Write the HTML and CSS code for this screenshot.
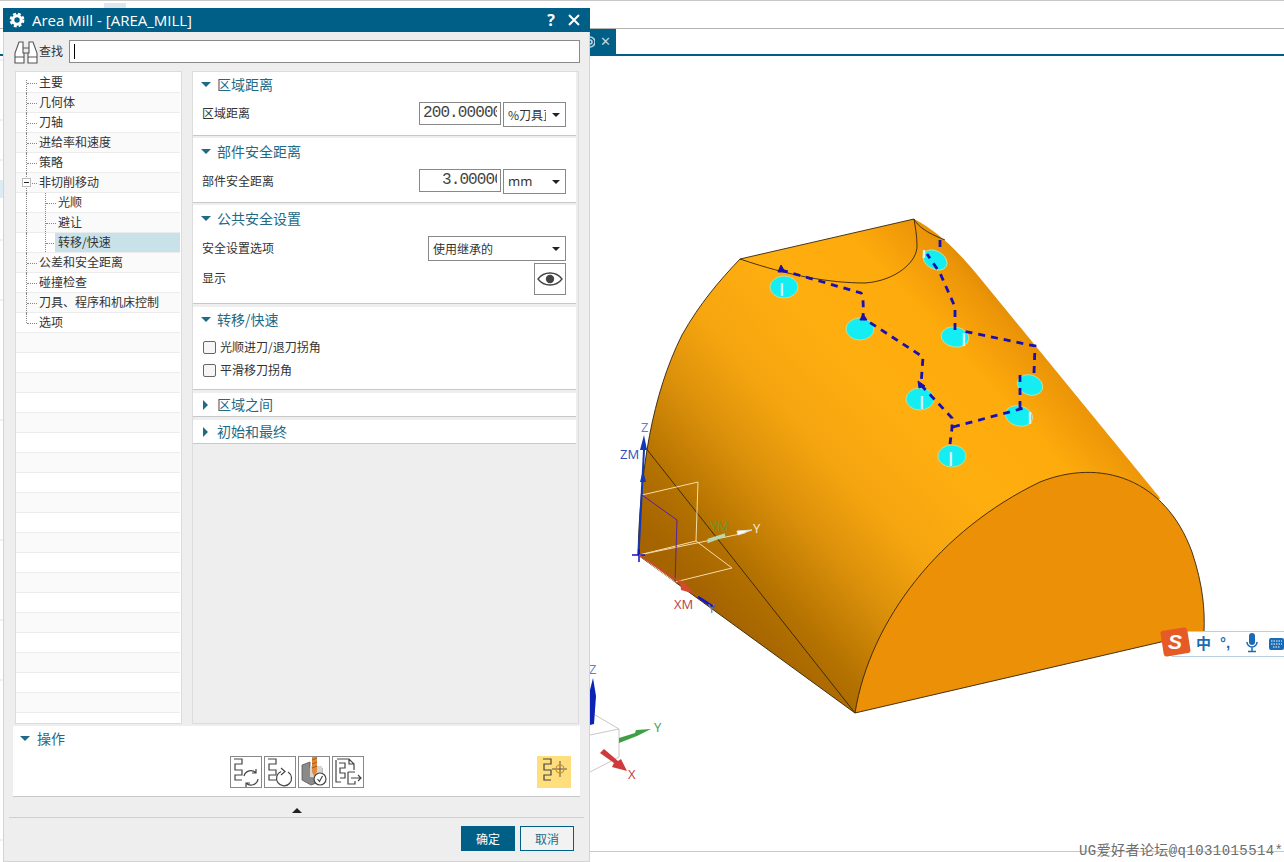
FILE: index.html
```html
<!DOCTYPE html>
<html lang="zh">
<head>
<meta charset="utf-8">
<title>Area Mill</title>
<link rel="stylesheet" href="styles.css">
</head>
<body>
<div class="app">
  <div class="topbar"></div>
  <div class="tabbar">
    <div class="tab">
      <svg class="tab-gear" viewBox="0 0 5 12" width="5" height="12"><path d="M0 1A5 5 0 0 1 0 11M0 4A2 2 0 0 1 0 8"/></svg>
      <span class="tab-x">✕</span>
    </div>
  </div>
  <svg class="scene" viewBox="0 0 1284 862" width="1284" height="862">
    <defs>
      <linearGradient id="sideA" gradientUnits="userSpaceOnUse" x1="745" y1="640" x2="1070" y2="340">
        <stop offset="0" stop-color="#a56400"/>
        <stop offset=".12" stop-color="#b47200"/>
        <stop offset=".28" stop-color="#dc910b"/>
        <stop offset=".42" stop-color="#f5a50f"/>
        <stop offset=".6" stop-color="#ffae10"/>
        <stop offset=".8" stop-color="#fdaa0c"/>
        <stop offset=".92" stop-color="#ec9508"/>
        <stop offset="1" stop-color="#d08000"/>
      </linearGradient>
    </defs>
    <g class="ghost">
      <path d="M0 60H3M0 120H3M0 160H3M0 240H3M0 300H3M0 420H3M0 540H3M0 620H3M0 680H3M0 840H3"/>
    </g>
    <rect class="ghost-blue" x="0" y="180" width="3" height="18"/>
    <rect class="ghost-grey" x="104" y="3" width="22" height="5"/>
    <path class="ghost-line" d="M0 0.5H1284"/>
    <path class="ghost-line" d="M590 851.5H1284"/>

    <path fill="url(#sideA)" d="M638 555C640 470 652 395 682 335C700 303 720 280 740 259L914 219C935 230 952 245 975 272L1160 498L1090 600L855 713Z"/>
    <path class="edge" d="M638 555C640 470 652 395 682 335C700 303 720 280 740 259L914 219C918 226 925 232 945 240"/>
    <path class="edge" d="M740 259C790 276 830 283 865 283C895 281 918 262 917 245C917 235 915 226 914 219"/>
    <path class="edge" d="M645 447L855 713M638 555L855 713"/>
    <path class="front" d="M855 713C870 620 940 530 1040 482C1100 458 1165 478 1192 552C1203 585 1205 610 1204 632Z"/>

    <g class="holes">
      <ellipse cx="784" cy="287" rx="14" ry="11"/>
      <ellipse cx="860" cy="329" rx="14" ry="11"/>
      <ellipse cx="955" cy="337" rx="14" ry="10" transform="rotate(10 955 337)"/>
      <ellipse cx="935" cy="260" rx="13" ry="9" transform="rotate(30 935 260)"/>
      <ellipse cx="920" cy="399" rx="14" ry="11"/>
      <ellipse cx="1030" cy="385" rx="13" ry="10" transform="rotate(20 1030 385)"/>
      <ellipse cx="1019" cy="416" rx="14" ry="10" transform="rotate(15 1019 416)"/>
      <ellipse cx="952" cy="456" rx="14" ry="11"/>
    </g>
    <path class="glints" d="M782 283V296M964 333V346M924 250V258M922 396V409M1030 412V424M951 452V466"/>
    <path class="toolpath" d="M781 270L861 293Q864 296 863 318L923 357L921 385L952 418L952 428L950 444M953 427L1028 407M1020 408V370M1034 373L1035 346L963 331M955 330V307L940 273L927 254M940 240V252"/>
    <path class="tool-heads" d="M781 265L785 272H778ZM863 314L867 320H860ZM918 381L925 386L919 388Z"/>

    <g class="triad">
      <path class="wcs-white" d="M642 495L698 482L696 541L639 555M696 541L732 568L675 582L639 555M639 555L745 533"/>
      <path class="wcs-purple" d="M642 495L677 520L675 582"/>
      <path class="wcs-z" d="M638.5 555L644 450"/>
      <path class="wcs-zhead" d="M640 482L643 470L646 482ZM640 450L644 435L647 450Z"/>
      <path class="wcs-cross" d="M632 555H645M639 549V562"/>
      <path class="wcs-x" d="M639 555L680 582"/>
      <path class="wcs-xhead" d="M680 580L686 584L695 594L681 590Z"/>
      <path class="wcs-yhead" d="M709 540L725 535L709 541Z"/>
      <path class="wcs-yhead2" d="M737 531L752 530L738 535Z"/>
      <path class="wcs-bhead" d="M698 597L702 599L714 607L708 604Z"/>
      <text class="t-blue" x="620" y="459">ZM</text>
      <text class="t-blue-faint" x="641" y="432">Z</text>
      <text class="t-green-faint" x="710" y="531">YM</text>
      <text class="t-white" x="753" y="533">Y</text>
      <text class="t-red" x="674" y="609">XM</text>
      <text class="t-blue-faint" x="708" y="613">Y</text>
    </g>

    <g class="absolute-triad">
      <path class="abs-line" d="M590 712L619 729V757L590 772M590 735L619 729"/>
      <path class="abs-z" d="M590 725L590 690L593 678L596 696L594 724Z"/>
      <path class="abs-y" d="M619 738L635 733L636 730L651 729L637 736L619 743Z"/>
      <path class="abs-x" d="M600 753L604 749L618 761L621 759L627 771L612 767L614 763Z"/>
      <text class="t-blue-faint" x="589" y="674">Z</text>
      <text class="t-green" x="654" y="732">Y</text>
      <text class="t-red" x="628" y="779">X</text>
    </g>

    <g class="ime">
      <rect class="ime-bar" x="1172" y="631.5" width="120" height="25"/>
      <rect class="ime-s" x="1162" y="629" width="27" height="26" rx="3" transform="rotate(-9 1175 642)"/>
      <text class="ime-logo" x="1175" y="649">S</text>
      <text class="ime-cn" x="1196" y="649">中</text>
      <text class="ime-p" x="1220" y="648">°,</text>
      <path class="ime-icon" d="M1249 636a3 3 0 0 1 6 0v6a3 3 0 0 1-6 0Z"/>
      <path class="ime-mic" d="M1247 642a5 5 0 0 0 10 0M1252 647v4M1248 651.5h8"/>
      <rect class="ime-icon" x="1269" y="638" width="15" height="12" rx="2"/>
      <path class="ime-keys" d="M1271 641h11M1271 644h11M1273 647h7"/>
    </g>
    <text class="watermark" x="1079" y="855">UG爱好者论坛@q1031015514*</text>
  </svg>
</div>

<section class="dialog">
  <header class="title">
    <svg class="gear" viewBox="0 0 16 16" width="16" height="16">
      <circle class="gear-ring" cx="8" cy="8" r="4.2"/>
      <circle class="gear-teeth" cx="8" cy="8" r="6.2"/>
    </svg>
    <span class="title-text">Area Mill - [AREA_MILL]</span>
    <span class="title-q">?</span>
    <svg class="title-x" viewBox="0 0 12 12" width="12" height="12"><path d="M1 1L11 11M11 1L1 11"/></svg>
  </header>

  <div class="find">
    <svg class="binoc" viewBox="0 0 26 24" width="26" height="24">
      <path d="M6 2H10V13H11V23H2V13ZM16 2H20L24 13V23H15V13H16ZM11 13H15M10 8H16M2 17H11M15 17H24"/>
    </svg>
    <span class="find-label">查找</span>
    <div class="find-input"><span class="caret"></span></div>
  </div>

  <div class="main">
    <ul class="tree">
      <li class="node first">主要</li>
      <li class="node">几何体</li>
      <li class="node">刀轴</li>
      <li class="node">进给率和速度</li>
      <li class="node">策略</li>
      <li class="node open"><span class="minus"></span>非切削移动</li>
      <li class="node sub">光顺</li>
      <li class="node sub">避让</li>
      <li class="node sub sub-last sel"><span class="sel-bg">转移/快速</span></li>
      <li class="node">公差和安全距离</li>
      <li class="node">碰撞检查</li>
      <li class="node">刀具、程序和机床控制</li>
      <li class="node last">选项</li>
      <li></li><li></li><li></li><li></li><li></li><li></li><li></li><li></li><li></li><li></li>
      <li></li><li></li><li></li><li></li><li></li><li></li><li></li><li></li><li></li>
    </ul>

    <div class="panel">
      <section class="sec sec-1">
        <h3 class="sec-head"><i class="tri-down"></i>区域距离</h3>
        <div class="row">
          <label>区域距离</label>
          <div class="num"><span class="num-view">200.00000</span></div>
          <div class="sel-box unit"><span class="clip">%刀具直径</span><i class="drop"></i></div>
        </div>
      </section>
      <section class="sec sec-2">
        <h3 class="sec-head"><i class="tri-down"></i>部件安全距离</h3>
        <div class="row">
          <label>部件安全距离</label>
          <div class="num num-small"><span class="num-view">3.00000</span></div>
          <div class="sel-box unit"><span class="clip latin">mm</span><i class="drop"></i></div>
        </div>
      </section>
      <section class="sec sec-3">
        <h3 class="sec-head"><i class="tri-down"></i>公共安全设置</h3>
        <div class="row">
          <label>安全设置选项</label>
          <div class="sel-box wide"><span class="clip">使用继承的</span><i class="drop"></i></div>
        </div>
        <div class="row row-eye">
          <label>显示</label>
          <button class="eye" type="button" aria-label="显示">
            <svg viewBox="0 0 26 16" width="26" height="16">
              <path class="eye-lid" d="M1 8C7 0 19 0 25 8C19 16 7 16 1 8Z"/>
              <circle class="eye-ball" cx="13" cy="8" r="4.2"/>
            </svg>
          </button>
        </div>
      </section>
      <section class="sec sec-4">
        <h3 class="sec-head"><i class="tri-down"></i>转移/快速</h3>
        <div class="checks">
          <label class="check"><input type="checkbox">光顺进刀/退刀拐角</label>
          <label class="check"><input type="checkbox">平滑移刀拐角</label>
        </div>
      </section>
      <section class="sec sec-5">
        <h3 class="sec-head slim"><i class="tri-right"></i>区域之间</h3>
      </section>
      <section class="sec sec-5">
        <h3 class="sec-head slim"><i class="tri-right"></i>初始和最终</h3>
      </section>
    </div>
  </div>

  <section class="ops">
    <h3 class="sec-head ops-head"><i class="tri-down"></i>操作</h3>
    <div class="ops-row">
      <div class="ops-spacer"></div>
      <div class="ops-tools">
        <button class="tool" type="button" aria-label="生成">
          <svg viewBox="0 0 32 32" width="32" height="32">
            <path class="op" d="M4 3H12V8H5V14H12V19H5V24H12"/>
            <path class="op" d="M14 20A7 7 0 0 1 26 17M28 23A7 7 0 0 1 16 27M26 13V17H22M16 31V27H20"/>
          </svg>
        </button>
        <button class="tool" type="button" aria-label="重播">
          <svg viewBox="0 0 32 32" width="32" height="32">
            <path class="op" d="M4 3H12V8H5V14H12V19H5V24H12"/>
            <path class="op" d="M24 16A7.5 7.5 0 1 1 17 15.5M17 12L21 15.500L17 19"/>
          </svg>
        </button>
        <button class="tool" type="button" aria-label="确认">
          <svg viewBox="0 0 32 32" width="32" height="32">
            <path class="box-side" d="M4 9L12 6V12L24 12L24 25L13 29L4 24Z"/>
            <path class="box-in" d="M12 10L24 10L24 22L12 21Z"/>
            <path class="drill" d="M14 1L19 0V16L16 20L14 16Z"/>
            <path class="drill-dark" d="M14 4L19 2M14 8L19 6M14 12L19 10"/>
            <circle class="badge" cx="22" cy="23" r="6"/>
            <path class="op" d="M19.500 23L21.500 25.500L24.500 20"/>
          </svg>
        </button>
        <button class="tool" type="button" aria-label="列表">
          <svg viewBox="0 0 32 32" width="32" height="32">
            <path class="op" d="M5 3H17L22 8V14M17 3V8H22M4 4V26H9"/>
            <path class="op" d="M7 7H13V12H8V17H13V22H8"/>
            <path class="op" d="M16 16H23M16 16V28H23V25M19 22H29M26 19L29 22L26 25"/>
          </svg>
        </button>
      </div>
      <div class="ops-end">
        <button class="tool tool-hot" type="button" aria-label="定位">
          <svg viewBox="0 0 34 32" width="34" height="32">
            <path class="op" d="M6 3H14V8H7V14H14V19H7V24H14"/>
            <path class="op-thin" d="M15 13H30M23 5V21"/>
            <circle class="op-orange" cx="23" cy="13" r="4"/>
          </svg>
        </button>
      </div>
    </div>
  </section>

  <div class="more"><i class="tri-up"></i></div>

  <footer class="foot">
    <button class="btn btn-ok" type="button">确定</button>
    <button class="btn btn-cancel" type="button">取消</button>
  </footer>
</section>
</body>
</html>
```

FILE: styles.css
```css
* { box-sizing: border-box; }
html, body { margin: 0; padding: 0; width: 1284px; height: 862px; overflow: hidden; background: #fff; }
body { font: 12px/1.2 "Noto Sans CJK SC", "Noto Sans", sans-serif; color: #333; }

.app { width: 1284px; height: 862px; position: relative; }
.topbar { height: 29px; border-bottom: 1px solid #b4b4b4; }
.tabbar { height: 27px; padding-left: 590px; border-bottom: 2px solid #005f87; }
.tab { width: 26px; height: 25px; background: #005f87; display: flex; align-items: center; justify-content: space-between; padding-right: 5px; }
.tab-gear { fill: none; stroke: #bcd6e2; stroke-width: 1.6; }
.tab-x { color: #c3d4dc; font: bold 13px "DejaVu Sans", sans-serif; }
.scene { position: absolute; left: 0; top: 0; pointer-events: none; }

.ghost path { stroke: #e2e2e2; fill: none; }
.ghost-blue { fill: #dcecf2; }
.ghost-grey { fill: #dfe6ee; }
.ghost-line { stroke: #c8c8c8; fill: none; }

.edge { fill: none; stroke: #33240a; stroke-width: .9; }
.front { fill: #ec9008; stroke: #33240a; stroke-width: .9; stroke-linejoin: round; }
.holes ellipse { fill: #14eef2; stroke: #e8e08c; stroke-width: .7; }
.glints { fill: none; stroke: #d8f0f8; stroke-width: 2.4; }
.toolpath { fill: none; stroke: #1a0fb0; stroke-width: 2.8; stroke-dasharray: 7 6; }
.tool-heads { fill: #1a0fb0; stroke: #1a0fb0; }

.wcs-white { fill: none; stroke: #f5dca8; stroke-width: 1; }
.wcs-purple { fill: none; stroke: #5a1fa0; stroke-width: 1; }
.wcs-z { stroke: #1438b4; stroke-width: 2; fill: none; }
.wcs-zhead { fill: #1438b4; }
.wcs-cross { stroke: #1010c0; stroke-width: 1.5; fill: none; }
.wcs-x { stroke: #c84a30; stroke-width: 1.6; fill: none; }
.wcs-xhead { fill: #d24a30; }
.wcs-yhead { fill: #cfe8c8; stroke: #b7d8b0; stroke-width: 3; }
.wcs-yhead2 { fill: #fff; stroke: #ddd; stroke-width: 1; }
.wcs-bhead { fill: #1414c8; stroke: #1414c8; stroke-width: 2; }
.triad text, .absolute-triad text { font: 13px "Open Sans", sans-serif; }
.t-blue { fill: #2a4fc0; }
.t-blue-faint { fill: #6a78c8; }
.t-green-faint { fill: #6a9a28; }
.t-green { fill: #3a9a50; }
.t-white { fill: #f5ead2; }
.t-red { fill: #b8404a; }

.abs-line { fill: none; stroke: #c8c8c8; }
.abs-z { fill: #0b22b4; }
.abs-y { fill: #3f9f45; }
.abs-x { fill: #cf3a3a; }

.ime-bar { fill: #fff; stroke: #b9cfe2; }
.ime-s { fill: #e65a26; }
.ime-logo { font: bold italic 21px "Liberation Sans", sans-serif; fill: #fff; text-anchor: middle; }
.ime-cn { font: bold 15px "Noto Sans CJK SC", sans-serif; fill: #1a6bb5; }
.ime-p { font: bold 15px "Liberation Sans", sans-serif; fill: #1a6bb5; }
.ime-icon { fill: #1a6bb5; }
.ime-mic { fill: none; stroke: #1a6bb5; stroke-width: 1.500; }
.ime-keys { fill: none; stroke: #fff; stroke-dasharray: 1.500 1; }
.watermark { font: 14px "Liberation Mono", "Noto Sans CJK SC", monospace; fill: #6e6e6e; letter-spacing: .42px; }

.dialog { position: absolute; left: 3px; top: 8px; width: 587px; height: 854px; background: #eee; border: 1px solid #d4d4d4; border-top: 0; display: flex; flex-direction: column; }
.title { height: 24px; margin: 0 -1px; background: #005f87; color: #fff; display: flex; align-items: center; padding: 0 10px 0 6px; flex: none; }
.gear { margin-right: 7px; }
.gear-ring { fill: none; stroke: #fff; stroke-width: 3; }
.gear-teeth { fill: none; stroke: #fff; stroke-width: 2.400; stroke-dasharray: 2.900 2; }
.title-text { font: 15px "Open Sans", sans-serif; flex: 1; }
.title-q { font: bold 16px "Open Sans", sans-serif; margin-right: 13px; }
.title-x { fill: none; stroke: #fff; stroke-width: 2; }

.find { height: 39px; padding: 8px 9px 0 9px; display: flex; align-items: flex-start; flex: none; }
.binoc { fill: #fff; stroke: #555; stroke-width: 1.100; flex: none; }
.find-label { width: 30px; line-height: 21px; color: #333; }
.find-input { width: 511px; height: 23px; background: #fff; border: 1px solid #8a8a8a; padding: 3px 4px; }
.caret { display: block; width: 1px; height: 15px; background: #000; }

.main { height: 653px; display: flex; padding-left: 11px; gap: 10px; flex: none; }
.tree { list-style: none; margin: 0; padding: 1px 0 0; width: 167px; background: #fff; border: 1px solid #dcdcdc; }
.tree li { height: 20px; border-bottom: 1px solid #ececec; margin-right: 1px; line-height: 17px; position: relative; }
.tree li:nth-child(even) { background-color: #fafafa; }
.node { padding-left: 23px; color: #333; }
.node::before { content: ""; position: absolute; left: 11px; top: 10px; width: 10px; border-top: 1px dotted #888; }
.node::after { content: ""; position: absolute; left: 10px; top: 0; bottom: -1px; border-left: 1px dotted #888; }
.node.first::after { top: 7px; }
.node.last::after { bottom: 9px; }
.node.open::before { left: 16px; width: 5px; }
.minus { position: absolute; left: 6px; top: 5px; width: 9px; height: 9px; background: #fff; border: 1px solid #bbb; z-index: 1; }
.minus::after { content: ""; position: absolute; left: 1px; top: 3px; width: 5px; height: 1px; background: #222; }
.sub { padding-left: 42px; }
.sub::before { left: 30px; width: 10px; }
.sub > .sel-bg { display: block; position: relative; margin-left: -3px; padding-left: 3px; height: 19px; background: #c9e2e9; }
.node.sub { background-image: linear-gradient(#888 50%, transparent 50%); background-size: 1px 2px; background-repeat: repeat-y; background-position: 29px 0; }

.panel { width: 387px; background: #eee; border: 1px solid #dcdcdc; padding: 0 2px 0 0; display: flex; flex-direction: column; gap: 2px; }
.sec { background: #fff; border-bottom: 1px solid #c8c8c8; }
.sec-1 { height: 64px; }
.sec-1 .row label { line-height: 22px; }
.sec-2 { height: 65px; padding-top: 1px; }
.sec-3 { height: 99px; padding-top: 1px; }
.sec-4 { height: 83px; margin-top: 1px; }
.sec-5 { height: 24px; margin-top: 1px; }
.sec-head { margin: 0; height: 26px; display: flex; align-items: center; padding: 0 0 2px 8px; color: #1f6a85; font-size: 14px; font-weight: 400; }
.sec-head.slim { height: 23px; padding-bottom: 0; }
.tri-down { width: 0; height: 0; border-left: 5px solid transparent; border-right: 5px solid transparent; border-top: 5px solid #1f6a85; margin-right: 6px; }
.tri-right { width: 0; height: 0; border-top: 5px solid transparent; border-bottom: 5px solid transparent; border-left: 5px solid #1f6a85; margin: 0 9px 0 2px; }
.tri-up { display: block; width: 0; height: 0; border-left: 5px solid transparent; border-right: 5px solid transparent; border-bottom: 5px solid #222; }

.row { display: flex; align-items: flex-start; padding: 4px 10px 0 9px; color: #333; }
.row label { flex: 1; line-height: 24px; }
.row-eye { padding-top: 2px; }
.row-eye label { line-height: 30px; }
.num { width: 82px; height: 23px; border: 1px solid #888; background: #fff; padding: 0 3px 0 3px; font: 16px/21px "Liberation Mono", monospace; letter-spacing: -.9px; color: #444; }
.num-view { display: block; overflow: hidden; white-space: nowrap; }
.num-small { padding-left: 22px; }
.sel-box { height: 25px; border: 1px solid #888; background: #fff; display: flex; align-items: center; padding-left: 4px; position: relative; }
.unit { width: 63px; margin-left: 2px; }
.wide { width: 138px; }
.clip { flex: 1; overflow: hidden; white-space: nowrap; margin-right: 19px; line-height: 23px; }
.latin { font-family: "Noto Sans", sans-serif; font-size: 13px; }
.drop { position: absolute; right: 5px; top: 10px; width: 0; height: 0; border-left: 4px solid transparent; border-right: 4px solid transparent; border-top: 4px solid #222; }
.eye { width: 32px; height: 32px; padding: 0; border: 1px solid #888; background: #fff; display: flex; align-items: center; justify-content: center; }
.eye-lid { fill: none; stroke: #444; stroke-width: 1.300; }
.eye-ball { fill: #444; }

.checks { padding: 3px 0 0 10px; }
.check { display: flex; align-items: center; height: 23px; color: #333; }
.check input { appearance: none; -webkit-appearance: none; width: 13px; height: 13px; margin: 0 4px 0 0; border: 1px solid #666; border-radius: 2px; background: #f6f6f6; }

.ops { width: 567px; height: 71px; margin: 2px 0 0 9px; background: #fff; border-bottom: 1px solid #c8c8c8; flex: none; }
.ops-head { padding-left: 7px; }
.ops-head .tri-down { margin-right: 7px; }
.ops-row { display: grid; grid-template-columns: 1fr auto 1fr; padding: 4px 9px 0 9px; }
.ops-tools { display: flex; gap: 2px; }
.ops-end { display: flex; justify-content: flex-end; }
.tool { width: 32px; height: 32px; padding: 0; border: 1px solid #888; background: #fff; display: block; overflow: hidden; }
.tool svg { display: block; margin: -1px; }
.tool-hot { width: 34px; background: #ffdf7d; border: 0; }
.tool-hot svg { margin: 0; }
.op { fill: none; stroke: #444; stroke-width: 1.200; }
.op-thin { fill: none; stroke: #555; stroke-width: 1; }
.op-orange { fill: none; stroke: #d8861a; stroke-width: 1.200; }
.box-side { fill: #8a8a8a; stroke: #555; stroke-width: .8; }
.box-in { fill: #d5d5d5; }
.drill { fill: #e08a3a; }
.drill-dark { fill: none; stroke: #a85a18; stroke-width: 1; }
.badge { fill: #fff; stroke: #444; stroke-width: 1.200; }

.more { height: 21px; margin: 0 5px; border-bottom: 1px solid #cfcfcf; display: flex; justify-content: center; padding: 11px 0 0 0; flex: none; }
.foot { flex: 1; display: flex; justify-content: flex-end; gap: 5px; padding: 8px 15px 0 0; }
.btn { width: 54px; height: 25px; padding: 0; font: 12px "Noto Sans CJK SC", sans-serif; border: 1px solid #005f87; }
.btn-ok { background: #005f87; color: #fff; }
.btn-cancel { background: #f2f2f2; color: #1f6a85; }
```
